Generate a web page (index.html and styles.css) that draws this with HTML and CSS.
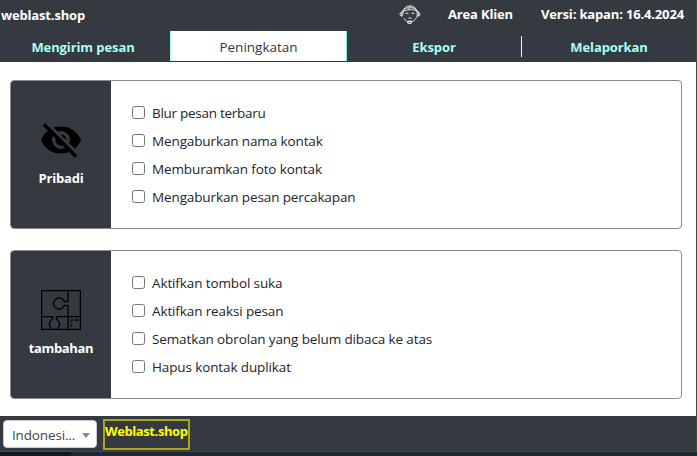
FILE: index.html
```
<!DOCTYPE html>
<html lang="id">
<head>
<meta charset="utf-8">
<title>weblast.shop</title>
<link rel="stylesheet" href="styles.css">
</head>
<body>
<div class="window">
  <header class="header">
    <span class="brand">weblast.shop</span>
    <svg class="support" viewBox="0 0 22 20" fill="none" stroke="#fff" stroke-linecap="round">
      <path d="M3.500 6.500C5 3 7.500 1 11 1S17 3 18.500 6.500" stroke-width="1"/>
      <path d="M3.800 10C3.300 5.500 6.500 2.600 11 2.600S18.700 5.500 18.200 10C17.800 13.500 15.500 16 12 17M5 13.500Q6 15.300 8 16.400" stroke-width=".8"/>
      <path d="M5 6Q8.500 5.500 10.500 3.500L9.500 5Q13 3.800 16.500 5.500" stroke-width=".8"/>
      <path d="M2.500 7C.5 7.500 .5 11 2.500 11.200ZM19.500 7C21.500 7.500 21.500 11 19.500 11.200Z" stroke-width="1"/>
      <path d="M6.700 8.200H9M12.800 8.200H15M9.800 13H12.200" stroke-width=".9"/>
      <ellipse cx="10.500" cy="17.300" rx="1.900" ry="1.200" stroke-width="1.200"/>
    </svg>
    <span class="client">Area Klien</span>
    <span class="version">Versi: kapan: 16.4.2024</span>
  </header>
  <nav class="tabs">
    <div class="tab tab-send"><span>Mengirim pesan</span></div>
    <div class="tab tab-active"><span>Peningkatan</span></div>
    <div class="tab tab-export"><span>Ekspor</span></div>
    <div class="tab tab-report"><span>Melaporkan</span></div>
  </nav>
  <main class="content">
    <section class="card">
      <div class="side">
        <svg class="side-icon" viewBox="0 0 40 40">
          <path fill="#000" fill-rule="evenodd" d="M0 20C4 11 11 6.500 20 6.500S36 11 40 20C36 29 29 33.500 20 33.500S4 29 0 20ZM20 11A9 9 0 1 0 20 29A9 9 0 1 0 20 11ZM20 14.500A5.500 5.500 0 1 1 20 25.500A5.500 5.500 0 1 1 20 14.500Z"/>
          <path d="M5.500 2.500L38 35" stroke="#353a40" stroke-width="3"/>
          <path d="M3 4.500L35 36.500" stroke="#000" stroke-width="3.400"/>
        </svg>
        <span class="side-title">Pribadi</span>
      </div>
      <div class="options">
        <label class="option"><input type="checkbox"><span class="label-tight">Blur pesan terbaru</span></label>
        <label class="option"><input type="checkbox"><span>Mengaburkan nama kontak</span></label>
        <label class="option"><input type="checkbox"><span>Memburamkan foto kontak</span></label>
        <label class="option"><input type="checkbox"><span>Mengaburkan pesan percakapan</span></label>
      </div>
    </section>
    <section class="card">
      <div class="side">
        <svg class="side-icon" viewBox="0 0 40 40" fill="none" stroke="#000" stroke-width="1.300">
          <path d="M.6 .6H39.400V39.400H.6Z"/>
          <path d="M27 .6V11.500H23.300A5.600 5.600 0 1 0 23.300 15.500H27V39.400"/>
          <path d="M.6 26.700H11.500V29.500A5.600 5.600 0 0 0 10 38.500V39.400M39.400 26.700H15.500V29.500A5.600 5.600 0 0 1 17 38.500V39.400"/>
          <path d="M30 31V32.500M30 34V36.500M30 30H32M33.500 30H37"/>
        </svg>
        <span class="side-title title-extra">tambahan</span>
      </div>
      <div class="options">
        <label class="option"><input type="checkbox"><span>Aktifkan tombol suka</span></label>
        <label class="option"><input type="checkbox"><span>Aktifkan reaksi pesan</span></label>
        <label class="option"><input type="checkbox"><span>Sematkan obrolan yang belum dibaca ke atas</span></label>
        <label class="option"><input type="checkbox"><span>Hapus kontak duplikat</span></label>
      </div>
    </section>
  </main>
  <footer class="footer">
    <div class="language"><span>Indonesi...</span><i class="arrow"></i></div>
    <div class="site"><span>Weblast.shop</span></div>
  </footer>
</div>
<div class="taskbar"></div>
</body>
</html>
```
FILE: styles.css
```
* { box-sizing: border-box; }
body {
  margin: 0;
  width: 697px;
  height: 456px;
  overflow: hidden;
  background: #fff;
  color: #212529;
  font: 13.5px/20px "Open Sans", "Noto Sans", sans-serif;
}
span { white-space: nowrap; }
.window {
  display: flex;
  flex-direction: column;
  height: 452px;
  border-right: 1px solid #4a4538;
  border-bottom: 1px solid #4a4a3c;
}
.header {
  display: flex;
  height: 31px;
  padding: 4px 0 0 1px;
  background: #353a40;
  color: #fff;
  font-weight: 700;
  font-size: 13px;
  letter-spacing: -0.16px;
}
.brand { flex: none; width: 398px; padding-top: 1px; }
.support { flex: none; width: 22px; height: 20px; margin-top: 1px; }
.client { flex: none; width: 93px; padding-left: 27px; }
.version { padding-left: 27px; }
.tabs {
  display: grid;
  grid-template-columns: 170px 177px 174px 175px;
  height: 31px;
  background: #353a40;
  color: #a9fff4;
  font-size: 13px;
  font-weight: 700;
  letter-spacing: -0.1px;
}
.tab {
  display: flex;
  align-items: center;
  justify-content: center;
  padding-top: 1px;
}
.tab-send { padding-right: 4px; }
.tab-active {
  height: 30px;
  padding-top: 2px;
  background: #fff;
  border-left: 1px solid #a9fff4;
  border-right: 1px solid #7feee0;
  color: #353a40;
  font-size: 13.5px;
  font-weight: 400;
  letter-spacing: 0;
}
.tab-report {
  height: 21px;
  margin-top: 5px;
  border-left: 1px solid #c8fff8;
}
.content {
  display: flex;
  flex-direction: column;
  gap: 21px;
  height: 354px;
  padding: 18px 14px 0 10px;
}
.card {
  display: flex;
  height: 149px;
  border: 1px solid #8b8b8b;
  border-radius: 4px;
  overflow: hidden;
}
.side {
  display: flex;
  flex-direction: column;
  align-items: center;
  width: 100px;
  padding-top: 39px;
  background: #353a40;
  color: #fff;
  font-size: 13px;
  font-weight: 700;
  letter-spacing: -0.2px;
}
.side-icon { width: 40px; height: 40px; }
.side-title { margin-top: 8px; }
.title-extra { letter-spacing: -0.35px; }
.options { padding: 18px 0 0 21px; letter-spacing: -0.12px; }
.label-tight { letter-spacing: -0.28px; }
.option { display: flex; align-items: center; height: 28px; }
.option input {
  appearance: none;
  width: 13px;
  height: 13px;
  margin: 0 7px 2px 0;
  border: 1px solid #767676;
  border-radius: 2.5px;
  background: #fff;
}
.footer {
  display: flex;
  flex: 1;
  gap: 6px;
  padding: 3px 3px 0;
  background: #353a40;
}
.language {
  display: flex;
  align-items: center;
  justify-content: space-between;
  width: 94px;
  height: 28px;
  margin-top: 1px;
  padding: 2px 6px 0 8px;
  border: 1px solid #ccc;
  border-radius: 4px;
  background: #fff;
  color: #444;
  letter-spacing: -0.15px;
}
.arrow {
  border: 4px solid transparent;
  border-top: 5px solid #888;
  border-bottom: 0;
}
.site {
  width: 87px;
  height: 31px;
  border: 2px solid #a8a817;
  color: #ff0;
  font-weight: 700;
  font-size: 13px;
  letter-spacing: -0.4px;
}
.taskbar {
  height: 4px;
  background: linear-gradient(90deg, #111820 71px, #1d2833 71px);
}
```
